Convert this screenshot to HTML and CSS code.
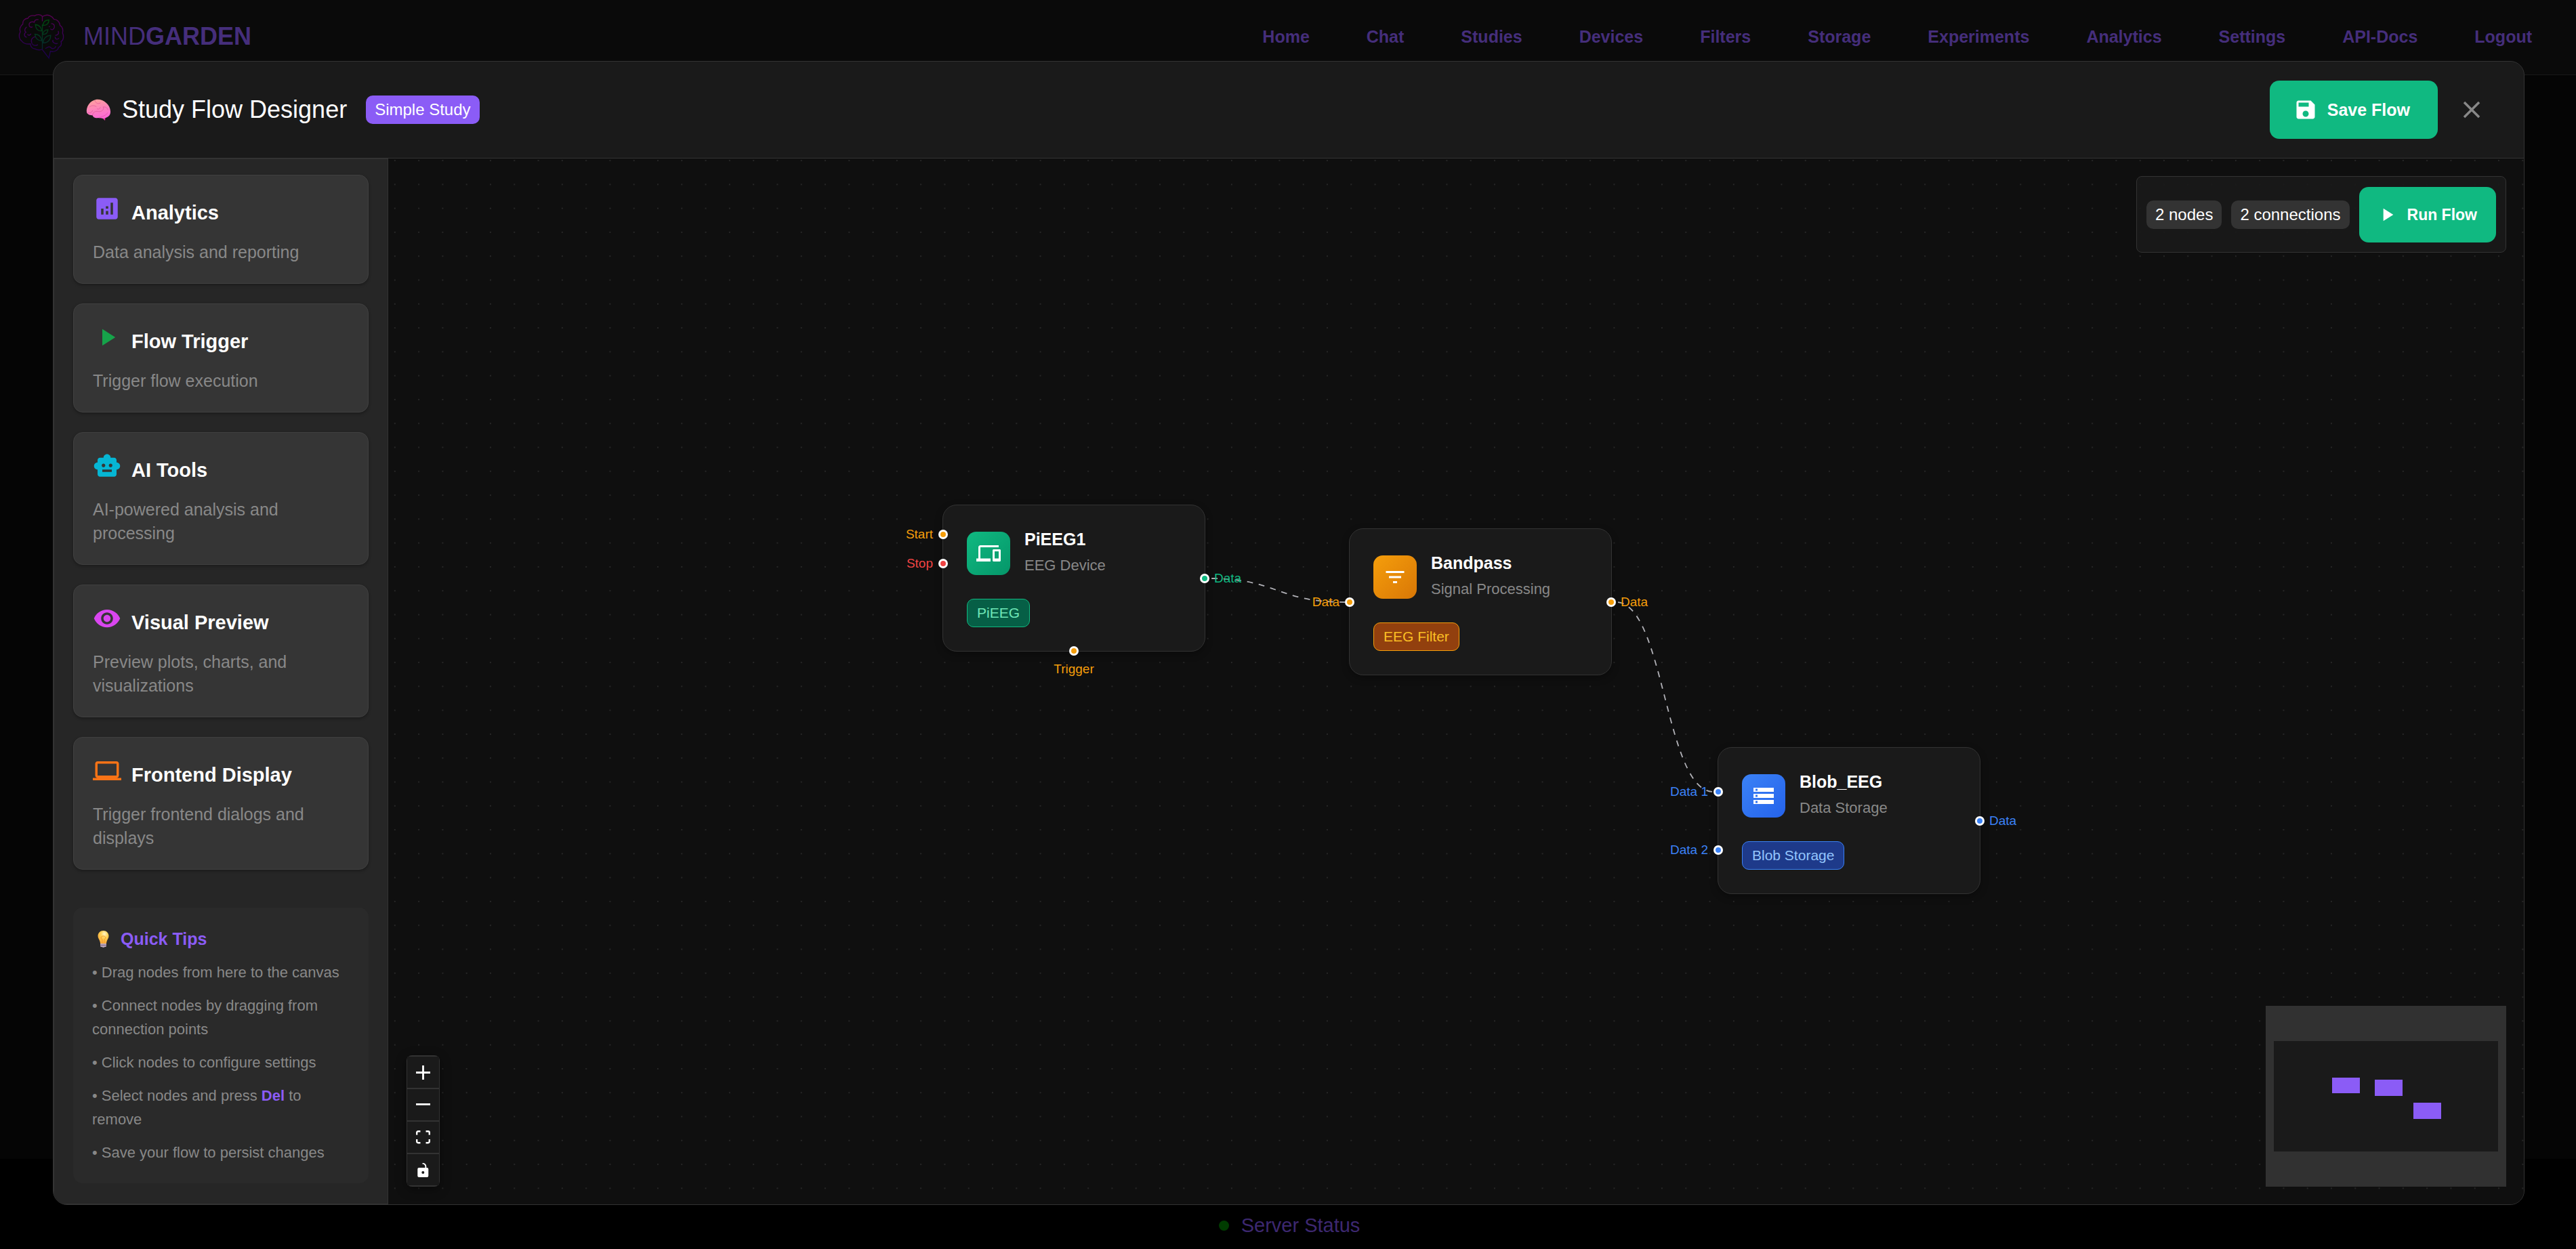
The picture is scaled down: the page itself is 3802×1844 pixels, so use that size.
FILE: index.html
```html
<!DOCTYPE html>
<html lang="en">
<head>
<meta charset="utf-8">
<meta name="viewport" content="width=device-width, initial-scale=1">
<title>MindGarden – Study Flow Designer</title>
<link rel="stylesheet" href="styles.css">
</head>
<body>
<header class="site-header">
  <a class="brand" href="#">
    <svg class="brand-logo" viewBox="50 45 205 205" fill="none" stroke-width="4" stroke-linecap="round" aria-hidden="true">
      <defs>
        <linearGradient id="brainStroke" x1="0" y1="48" x2="0" y2="245" gradientUnits="userSpaceOnUse">
          <stop offset="0" stop-color="#570050"/><stop offset=".45" stop-color="#3d0055"/><stop offset="1" stop-color="#170048"/>
        </linearGradient>
        <linearGradient id="leafStroke" x1="0" y1="70" x2="0" y2="200" gradientUnits="userSpaceOnUse">
          <stop offset="0" stop-color="#004a0c"/><stop offset="1" stop-color="#06272f"/>
        </linearGradient>
      </defs>
      <g stroke="url(#brainStroke)">
        <path d="M157 78V58C150 48 132 48 123 55C112 51 97 56 93 66C78 67 68 78 70 92C58 100 54 116 59 126C50 142 54 160 66 168C74 178 88 182 104 180C104 192 112 202 124 202C136 208 148 208 156 204L186 243L193 213C208 218 226 210 229 196C240 190 244 180 240 170C252 164 254 144 247 132C250 118 246 104 236 98C234 82 222 70 208 70C200 56 182 48 168 54L157 58"/>
        <path d="M138 72C128 70 121 76 121 84M121 84C112 78 98 84 98 95C98 104 106 108 112 105M86 106C76 114 78 124 84 128C74 134 76 148 86 150M92 138C96 144 102 142 106 136M126 148C112 150 104 162 110 176M112 180C118 190 130 188 136 184M198 90C210 90 214 102 208 112C204 118 198 118 194 114M188 103h1M228 124C232 134 226 142 216 142M214 150C214 158 222 162 230 156M224 178C214 182 200 172 204 164M172 200C182 196 186 188 194 196C200 204 214 202 216 192"/>
      </g>
      <g stroke="url(#leafStroke)">
        <path d="M157 202V95M160 98C160 82 170 74 186 73C187 88 178 98 162 98M154 122C136 124 128 112 126 94C142 96 152 104 154 122M159 138C161 124 168 117 182 117C181 130 174 138 159 138M154 166C136 166 126 154 124 137C142 138 152 148 154 166M160 176C162 156 172 144 194 142C194 162 182 176 160 176"/>
      </g>
    </svg>
    <span class="brand-name">MIND<strong>GARDEN</strong></span>
  </a>
  <nav class="site-nav" aria-label="Main">
    <a href="#">Home</a>
    <a href="#">Chat</a>
    <a href="#">Studies</a>
    <a href="#">Devices</a>
    <a href="#">Filters</a>
    <a href="#">Storage</a>
    <a href="#">Experiments</a>
    <a href="#">Analytics</a>
    <a href="#">Settings</a>
    <a href="#">API-Docs</a>
    <a href="#">Logout</a>
  </nav>
</header>

<footer class="site-footer"><span class="status-dot"></span>Server Status</footer>

<section class="designer" role="dialog" aria-labelledby="designer-title">
  <header class="designer-header">
    <svg class="title-icon" viewBox="33 36 150 120" aria-hidden="true">
      <defs>
        <linearGradient id="pinkBrain" x1="90" y1="48" x2="110" y2="140" gradientUnits="userSpaceOnUse">
          <stop offset="0" stop-color="#ffa29c"/><stop offset=".5" stop-color="#fd82bb"/><stop offset="1" stop-color="#fd66dc"/>
        </linearGradient>
      </defs>
      <path fill="#e0329f" d="M118 128l17 16 2-18z"/>
      <path fill="url(#pinkBrain)" d="M54 108C50 84 68 54 98 50C128 48 158 72 159 103C160 118 152 128 138 132C128 136 114 133 104 132C94 135 82 130 80 121C70 121 58 118 54 108z"/>
      <path fill="none" stroke="#dd5596" stroke-width="2" stroke-linecap="round" d="M66 84C74 76 88 76 96 82M90 55C94 68 104 72 114 66M80 120C80 108 92 100 106 104C122 106 132 94 128 84M60 110C70 112 76 108 80 100M128 84C136 82 144 86 148 96M110 130C124 126 140 122 146 110M100 92C106 96 112 92 114 86"/>
    </svg>
    <h1 class="designer-title" id="designer-title">Study Flow Designer</h1>
    <span class="tag tag-primary">Simple Study</span>
    <button class="btn btn-save" type="button">
      <svg class="icon-36" viewBox="0 0 24 24" aria-hidden="true"><path d="M17 3H5c-1.11 0-2 .9-2 2v14c0 1.1.89 2 2 2h14c1.1 0 2-.9 2-2V7l-4-4zm-5 16c-1.66 0-3-1.34-3-3s1.34-3 3-3 3 1.34 3 3-1.34 3-3 3zm3-10H5V5h10v4z"/></svg>
      Save Flow
    </button>
    <button class="btn-close" type="button" aria-label="Close">
      <svg class="icon-42" viewBox="0 0 24 24" aria-hidden="true"><path d="M19 6.41L17.59 5 12 10.59 6.41 5 5 6.41 10.59 12 5 17.59 6.41 19 12 13.41 17.59 19 19 17.59 13.41 12z"/></svg>
    </button>
  </header>

  <div class="designer-body">
    <aside class="sidebar">
      <div class="palette">
        <article class="palette-card" draggable="true">
          <div class="palette-head">
            <svg class="icon-42 violet" viewBox="0 0 24 24" aria-hidden="true"><path d="M19 3H5c-1.1 0-2 .9-2 2v14c0 1.1.9 2 2 2h14c1.1 0 2-.9 2-2V5c0-1.1-.9-2-2-2zM9 17H7v-5h2v5zm4 0h-2v-3h2v3zm0-5h-2v-2h2v2zm4 5h-2V7h2v10z"/></svg>
            <h2 class="palette-title">Analytics</h2>
          </div>
          <p class="palette-text">Data analysis and reporting</p>
        </article>
        <article class="palette-card" draggable="true">
          <div class="palette-head">
            <svg class="icon-42 green" viewBox="0 0 24 24" aria-hidden="true"><path d="M8 5v14l11-7z"/></svg>
            <h2 class="palette-title">Flow Trigger</h2>
          </div>
          <p class="palette-text">Trigger flow execution</p>
        </article>
        <article class="palette-card" draggable="true">
          <div class="palette-head">
            <svg class="icon-42 cyan" viewBox="0 0 24 24" aria-hidden="true"><path d="M20 9V7c0-1.1-.9-2-2-2h-3c0-1.66-1.34-3-3-3S9 3.34 9 5H6c-1.1 0-2 .9-2 2v2c-1.66 0-3 1.34-3 3s1.34 3 3 3v4c0 1.1.9 2 2 2h12c1.1 0 2-.9 2-2v-4c1.66 0 3-1.34 3-3s-1.34-3-3-3zM7.5 11.5c0-.83.67-1.5 1.5-1.5s1.5.67 1.5 1.5S9.83 13 9 13s-1.5-.67-1.5-1.5zM16 17H8v-2h8v2zm-1-4c-.83 0-1.5-.67-1.5-1.5S14.17 10 15 10s1.5.67 1.5 1.5S15.83 13 15 13z"/></svg>
            <h2 class="palette-title">AI Tools</h2>
          </div>
          <p class="palette-text">AI-powered analysis and processing</p>
        </article>
        <article class="palette-card" draggable="true">
          <div class="palette-head">
            <svg class="icon-42 magenta" viewBox="0 0 24 24" aria-hidden="true"><path d="M12 4.5C7 4.5 2.73 7.61 1 12c1.73 4.39 6 7.5 11 7.5s9.27-3.11 11-7.5c-1.73-4.39-6-7.5-11-7.5zM12 17c-2.76 0-5-2.24-5-5s2.24-5 5-5 5 2.24 5 5-2.24 5-5 5zm0-8c-1.66 0-3 1.34-3 3s1.34 3 3 3 3-1.34 3-3-1.34-3-3-3z"/></svg>
            <h2 class="palette-title">Visual Preview</h2>
          </div>
          <p class="palette-text">Preview plots, charts, and visualizations</p>
        </article>
        <article class="palette-card" draggable="true">
          <div class="palette-head">
            <svg class="icon-42 orange" viewBox="0 0 24 24" aria-hidden="true"><path d="M20 18c1.1 0 1.99-.9 1.99-2L22 6c0-1.1-.9-2-2-2H4c-1.1 0-2 .9-2 2v10c0 1.1.9 2 2 2H0v2h24v-2h-4zM4 6h16v10H4V6z"/></svg>
            <h2 class="palette-title">Frontend Display</h2>
          </div>
          <p class="palette-text">Trigger frontend dialogs and displays</p>
        </article>
      </div>

      <section class="tips">
        <h2 class="tips-title">
          <svg class="tips-icon" viewBox="0 0 40 36" aria-hidden="true">
            <defs>
              <radialGradient id="bulbGlow" cx=".6" cy=".25" r=".7">
                <stop offset="0" stop-color="#fff6c8"/><stop offset=".45" stop-color="#ffd257"/><stop offset="1" stop-color="#fbae3c"/>
              </radialGradient>
            </defs>
            <path fill="#b9a3b8" d="M12 25h9v3.500c0 1-1 1.500-2 1.500l-2.500 1-2.500-1c-1 0-2-.5-2-1.500z"/>
            <path fill="none" stroke="#7f6a86" d="M12 27.500h9"/>
            <path fill="url(#bulbGlow)" d="M16.500 6C12 6 8.500 9.500 8.500 13.800c0 3.500 1.900 4.700 2.800 7.700l.9 3.500h8.600l.9-3.500c.9-3 2.800-4.200 2.800-7.700C24.500 9.500 21 6 16.500 6z"/>
            <path fill="none" stroke="#f39a2b" d="M15 24v-5c-3-2-2-5 1.500-5s4.500 3 1.500 5v5"/>
          </svg>Quick Tips</h2>
        <p>• Drag nodes from here to the canvas</p>
        <p>• Connect nodes by dragging from connection points</p>
        <p>• Click nodes to configure settings</p>
        <p>• Select nodes and press <strong>Del</strong> to remove</p>
        <p>• Save your flow to persist changes</p>
      </section>
    </aside>

    <main class="canvas">
      <svg class="canvas-layer" aria-hidden="true">
        <defs>
          <pattern id="dots" x="8.9" y="2.1" width="35.286" height="35.286" patternUnits="userSpaceOnUse">
            <circle cx=".9" cy=".9" r=".9" fill="#333"/>
          </pattern>
        </defs>
        <rect width="100%" height="100%" fill="url(#dots)"/>
        <g fill="none" stroke="#b1b1b7" stroke-width="1.800" stroke-dasharray="8.800 8.800" stroke-dashoffset="-3">
          <path d="M1212 620C1312 620 1312 655 1412 655"/>
          <path d="M1812 655C1884 655 1884 935 1956 935"/>
        </g>
      </svg>

      <article class="node node-device">
        <div class="node-head">
          <span class="node-icon"><svg class="icon-36" viewBox="0 0 24 24" aria-hidden="true"><path d="M4 6h18V4H4c-1.100 0-2 .9-2 2v11H0v3h14v-3H4V6zm19 2h-6c-.55 0-1 .45-1 1v10c0 .55.45 1 1 1h6c.55 0 1-.45 1-1V9c0-.55-.45-1-1-1zm-1 9h-4v-7h4v7z"/></svg></span>
          <div>
            <h3 class="node-title">PiEEG1</h3>
            <p class="node-sub">EEG Device</p>
          </div>
        </div>
        <span class="node-tag">PiEEG</span>
        <span class="port port-left at-20 amber"><span class="port-label">Start</span></span>
        <span class="port port-left at-40 red"><span class="port-label">Stop</span></span>
        <span class="port port-right at-50 emerald"><span class="port-label">Data</span></span>
        <span class="port port-bottom amber"><span class="port-label">Trigger</span></span>
      </article>

      <article class="node node-filter">
        <div class="node-head">
          <span class="node-icon"><svg class="icon-36" viewBox="0 0 24 24" aria-hidden="true"><path d="M10 18h4v-2h-4v2zM3 6v2h18V6H3zm3 7h12v-2H6v2z"/></svg></span>
          <div>
            <h3 class="node-title">Bandpass</h3>
            <p class="node-sub">Signal Processing</p>
          </div>
        </div>
        <span class="node-tag">EEG Filter</span>
        <span class="port port-left at-50 amber"><span class="port-label">Data</span></span>
        <span class="port port-right at-50 amber"><span class="port-label">Data</span></span>
      </article>

      <article class="node node-storage">
        <div class="node-head">
          <span class="node-icon"><svg class="icon-36" viewBox="0 0 24 24" aria-hidden="true"><path d="M2 20h20v-4H2v4zm2-3h2v2H4v-2zM2 4v4h20V4H2zm4 3H4V5h2v2zm-4 7h20v-4H2v4zm2-3h2v2H4v-2z"/></svg></span>
          <div>
            <h3 class="node-title">Blob_EEG</h3>
            <p class="node-sub">Data Storage</p>
          </div>
        </div>
        <span class="node-tag">Blob Storage</span>
        <span class="port port-left at-30 blue"><span class="port-label">Data 1</span></span>
        <span class="port port-left at-70 blue"><span class="port-label">Data 2</span></span>
        <span class="port port-right at-50 blue"><span class="port-label">Data</span></span>
      </article>

      <div class="toolbar">
        <span class="tag">2 nodes</span>
        <span class="tag">2 connections</span>
        <button class="btn btn-run" type="button">
          <svg class="icon-32" viewBox="0 0 24 24" aria-hidden="true"><path d="M8 5v14l11-7z"/></svg>
          Run Flow
        </button>
      </div>

      <div class="controls">
        <button type="button" aria-label="Zoom in"><svg viewBox="0 0 32 32"><path d="M32 18.133H18.133V32h-4.266V18.133H0v-4.266h13.867V0h4.266v13.867H32z"/></svg></button>
        <button type="button" aria-label="Zoom out"><svg viewBox="0 0 32 5"><path d="M0 0h32v4.200H0z"/></svg></button>
        <button type="button" aria-label="Fit view"><svg viewBox="0 0 32 30"><path d="M3.692 4.630c0-.53.4-.938.939-.938h5.215V0H4.708C2.130 0 0 2.054 0 4.630v5.216h3.692V4.631zM27.354 0h-5.200v3.692h5.170c.53 0 .984.4.984.939v5.215H32V4.631A4.624 4.624 0 0027.354 0zm.954 24.830c0 .532-.4.940-.939.940h-5.215v3.768h5.215c2.577 0 4.631-2.130 4.631-4.707v-5.139h-3.692v5.139zm-23.677.940c-.531 0-.939-.4-.939-.940v-5.138H0v5.139c0 2.577 2.130 4.707 4.708 4.707h5.138V25.770H4.631z"/></svg></button>
        <button type="button" aria-label="Toggle lock"><svg viewBox="0 0 25 32"><path d="M21.333 10.667H19.810V7.619C19.810 3.429 16.380 0 12.190 0c-4.114 1.828-1.370 2.133.305 2.438 1.676.305 4.420 2.590 4.420 5.181v3.048H3.047A3.056 3.056 0 000 13.714v15.238A3.056 3.056 0 003.048 32h18.285a3.056 3.056 0 003.048-3.048V13.714a3.056 3.056 0 00-3.048-3.047zM12.190 24.533a3.056 3.056 0 01-3.047-3.047 3.056 3.056 0 013.047-3.048 3.056 3.056 0 013.048 3.048 3.056 3.056 0 01-3.048 3.047z"/></svg></button>
      </div>

      <svg class="minimap" viewBox="0 0 355 267" role="img" aria-label="Mini map">
        <rect width="355" height="267" fill="#313131"/>
        <rect x="12" y="52" width="331" height="163" fill="#1a1a1a"/>
        <g fill="#8b5cf6">
          <rect x="98" y="106" width="41" height="23"/>
          <rect x="161" y="109" width="41" height="24"/>
          <rect x="218" y="143" width="41" height="24"/>
        </g>
      </svg>
    </main>
  </div>
</section>
</body>
</html>
```
FILE: styles.css
```css
* {
  box-sizing: border-box;
}

body {
  margin: 0;
  min-height: 100vh;
  display: flex;
  flex-direction: column;
  justify-content: space-between;
  background: #050505;
  color: #fff;
  font-family: "Liberation Sans", Arial, sans-serif;
}

h1, h2, h3, p {
  margin: 0;
}

button {
  font-family: inherit;
  border: 0;
  cursor: pointer;
}

svg {
  display: block;
  flex: none;
}

.icon-32 { width: 32px; height: 32px; fill: currentColor; }
.icon-36 { width: 36px; height: 36px; fill: currentColor; }
.icon-42 { width: 42px; height: 42px; fill: currentColor; }

.violet { color: #8b5cf6; }
.green { color: #16a34a; }
.cyan { color: #06b6d4; }
.magenta { color: #d946ef; }
.orange { color: #f97316; }

/* Site header and footer */
.site-header {
  display: flex;
  align-items: center;
  justify-content: space-between;
  height: 111px;
  padding: 0 65px 3px 27px;
  background: #0a0a0a;
  border-bottom: 1px solid #191919;
}

.brand {
  display: flex;
  align-items: center;
  gap: 28px;
  color: #452e7b;
  font-size: 36px;
  text-decoration: none;
}

.brand-logo {
  width: 68px;
  height: 68px;
}

.site-nav {
  display: flex;
  gap: 84px;
}

.site-nav a {
  color: #452e7b;
  font-size: 25px;
  font-weight: 700;
  line-height: 36px;
  text-decoration: none;
}

.site-footer {
  display: flex;
  align-items: center;
  justify-content: center;
  gap: 18px;
  height: 133px;
  padding: 64px 0 0 4px;
  background: #000;
  color: #3d2870;
  font-size: 29px;
}

.status-dot {
  width: 15px;
  height: 15px;
  border-radius: 50%;
  background: #003c00;
}

/* Designer dialog */
.designer {
  position: fixed;
  inset: 90px 76px 65px 78px;
  display: flex;
  flex-direction: column;
  overflow: hidden;
  background: #1a1a1a;
  border: 1px solid #333;
  border-radius: 21px;
}

.designer-header {
  display: flex;
  align-items: center;
  padding: 28px 42px;
  border-bottom: 1px solid #333;
}

.title-icon {
  width: 50px;
  height: 40px;
  margin-right: 9px;
}

.designer-title {
  margin-right: 28px;
  font-size: 36px;
  font-weight: 400;
}

.tag {
  padding: 0 13px;
  border-radius: 10px;
  background: #333;
  font-size: 24px;
  line-height: 42px;
  white-space: nowrap;
}

.tag-primary {
  background: #8b5cf6;
}

.btn {
  display: flex;
  align-items: center;
  gap: 14px;
  border-radius: 14px;
  background: #10b981;
  color: #fff;
  font-weight: 700;
  white-space: nowrap;
}

.btn-save {
  height: 86px;
  margin-left: auto;
  padding: 0 41px 0 35px;
  font-size: 25px;
}

.btn-close {
  margin-left: 15px;
  padding: 14px;
  background: none;
  color: #888;
}

.designer-body {
  flex: 1;
  display: flex;
  min-height: 0;
}

/* Sidebar */
.sidebar {
  flex: none;
  display: flex;
  flex-direction: column;
  gap: 56px;
  width: 494px;
  padding: 23px 28px 28px;
  background: #262626;
  border: 1px solid #333;
}

.palette {
  display: flex;
  flex-direction: column;
  gap: 29px;
}

.palette-card {
  padding: 28px;
  background: #353535;
  border: 1px solid #404040;
  border-radius: 14px;
  box-shadow: 0 2px 4px rgba(0, 0, 0, 0.3);
}

.palette-head {
  display: flex;
  gap: 15px;
  margin-bottom: 14px;
}

.palette-title {
  font-size: 29px;
  line-height: 54px;
}

.palette-text {
  color: #888;
  font-size: 25px;
  line-height: 35px;
}

.tips {
  display: flex;
  flex-direction: column;
  gap: 14px;
  padding: 28px;
  background: #2a2a2a;
  border-radius: 14px;
}

.tips-title {
  display: flex;
  gap: 2px;
  color: #8b5cf6;
  font-size: 25px;
  line-height: 36px;
}

.tips-icon {
  width: 40px;
  height: 36px;
}

.tips p {
  color: #888;
  font-size: 22px;
  line-height: 35px;
}

.tips strong {
  color: #8b5cf6;
}

/* Canvas */
.canvas {
  position: relative;
  flex: 1;
  background: #0f0f0f;
}

.canvas-layer {
  position: absolute;
  inset: 0;
  width: 100%;
  height: 100%;
}

.node {
  position: absolute;
  width: 388px;
  padding: 35px;
  background: #1a1a1a;
  border: 1px solid #333;
  border-radius: 21px;
  box-shadow: 0 4px 12px rgba(0, 0, 0, 0.3);
}

.node-device { left: 818px; top: 511px; }
.node-filter { left: 1418px; top: 546px; }
.node-storage { left: 1962px; top: 869px; }

.node-head {
  display: flex;
  align-items: center;
  gap: 21px;
  margin-bottom: 31px;
}

.node-icon {
  display: grid;
  place-items: center;
  width: 64px;
  height: 64px;
  border-radius: 14px;
}

.node-device .node-icon { background: linear-gradient(135deg, #10b981, #059669); }
.node-filter .node-icon { background: linear-gradient(135deg, #f59e0b, #d97706); }
.node-storage .node-icon { background: linear-gradient(135deg, #3b82f6, #2563eb); }

.node-title {
  margin-bottom: 6px;
  font-size: 25px;
  line-height: 30px;
}

.node-sub {
  color: #888;
  font-size: 22px;
  line-height: 36px;
}

.node-tag {
  display: inline-block;
  padding: 0 14px;
  border: 1px solid;
  border-radius: 10px;
  font-size: 21px;
  line-height: 40px;
  vertical-align: top;
}

.node-device .node-tag { background: #065f46; border-color: #10b981; color: #6ee7b7; }
.node-filter .node-tag { background: #92400e; border-color: #f59e0b; color: #fbbf24; }
.node-storage .node-tag { background: #1e3a8a; border-color: #3b82f6; color: #93c5fd; }

/* Connection ports sit on the node's edge */
.port {
  position: absolute;
  width: 14px;
  height: 14px;
  border: 3px solid #fff;
  border-radius: 50%;
  background: currentColor;
  transform: translate(-50%, -50%);
}

.port-left { left: 0; }
.port-right { left: 100%; }
.port-bottom { left: 50%; top: 100%; }
.at-20 { top: 20%; }
.at-30 { top: 30%; }
.at-40 { top: 40%; }
.at-50 { top: 50%; }
.at-70 { top: 70%; }

.amber { color: #f59e0b; }
.red { color: #ef4444; }
.emerald { color: #10b981; }
.blue { color: #3b82f6; }

.port-label {
  position: absolute;
  top: -8px;
  font-size: 19px;
  line-height: 24px;
  white-space: nowrap;
}

.port-left .port-label { right: 19px; }
.port-right .port-label { left: 18px; }

.port-bottom .port-label {
  top: 19px;
  left: 50%;
  transform: translateX(-50%);
}

/* Panels over the canvas */
.toolbar {
  position: absolute;
  top: 26px;
  right: 26px;
  display: flex;
  align-items: center;
  gap: 14px;
  padding: 15px 14px 14px;
  background: rgba(26, 26, 26, 0.9);
  border: 1px solid #333;
  border-radius: 8px;
}

.btn-run {
  height: 82px;
  padding: 0 28px 0 25px;
  font-size: 23px;
}

.controls {
  position: absolute;
  left: 27px;
  bottom: 26px;
  display: flex;
  flex-direction: column;
  gap: 2px;
  width: 49px;
  padding: 2px 1px;
  background: #333;
  border-radius: 8px;
  box-shadow: 0 4px 16px rgba(0, 0, 0, 0.4);
}

.controls button {
  display: grid;
  place-items: center;
  height: 46px;
  padding: 0;
  background: #1a1a1a;
  color: #fff;
}

.controls svg {
  width: 21px;
  max-height: 21px;
  fill: currentColor;
}

.minimap {
  position: absolute;
  right: 26px;
  bottom: 26px;
  width: 355px;
  height: 267px;
}
```
